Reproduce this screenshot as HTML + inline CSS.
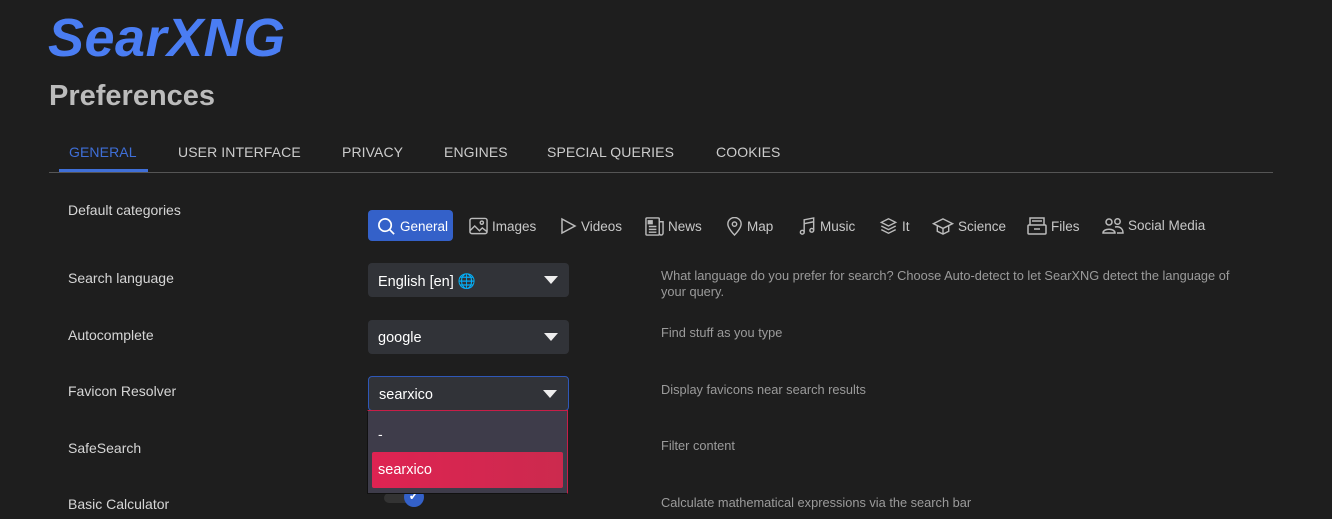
<!DOCTYPE html>
<html><head><meta charset="utf-8"><style>
*{box-sizing:border-box;margin:0;padding:0}
body{width:1332px;height:519px;overflow:hidden;background:#1e1e1e;font-family:"Liberation Sans",sans-serif;position:relative;color:#dcdcdc}
.a{position:absolute;white-space:nowrap}
.logo{left:48px;top:7px;font-size:54px;font-weight:bold;font-style:italic;color:#4a7df3;letter-spacing:0.5px}
.pref{left:49px;top:80px;font-size:29px;font-weight:bold;color:#bbb}
.tab{top:144px;font-size:14px;color:#ccc;letter-spacing:0.1px}
.lbl{left:68px;font-size:14px;color:#d6d6d6}
.help{left:661px;font-size:12.8px;color:#9b9b9b;line-height:16px}
.sel{left:368px;width:201px;height:34px;background:#313338;border-radius:4px;font-size:14.5px;color:#fff;padding:10px 10px}
.sel:after{content:"";position:absolute;right:11px;top:13px;border-left:7px solid transparent;border-right:7px solid transparent;border-top:8px solid #eee}
.cat{top:217px;font-size:13.5px;color:#c8c8c8;display:flex;align-items:center}
.cat svg{margin-right:4px}
</style></head><body>
<div class="a logo">SearXNG</div>
<div class="a pref">Preferences</div>
<div class="a tab" style="left:69px;color:#3f6fd8">GENERAL</div>
<div class="a tab" style="left:178px">USER INTERFACE</div>
<div class="a tab" style="left:342px">PRIVACY</div>
<div class="a tab" style="left:444px">ENGINES</div>
<div class="a tab" style="left:547px">SPECIAL QUERIES</div>
<div class="a tab" style="left:716px">COOKIES</div>
<div class="a" style="left:49px;top:172px;width:1224px;height:1px;background:#555"></div>
<div class="a" style="left:59px;top:169px;width:89px;height:3px;background:#3f6fd8"></div>

<div class="a lbl" style="top:202px">Default categories</div>
<div class="a lbl" style="top:270px">Search language</div>
<div class="a lbl" style="top:327px">Autocomplete</div>
<div class="a lbl" style="top:383px">Favicon Resolver</div>
<div class="a lbl" style="top:440px">SafeSearch</div>
<div class="a lbl" style="top:496px">Basic Calculator</div>

<div class="a" style="left:368px;top:210px;width:85px;height:31px;background:#3461c9;border-radius:4px"></div>
<div class="a cat" style="left:377px;color:#fff"><svg width="19" height="19" viewBox="0 0 20 20" fill="none" stroke="#fff" stroke-width="1.8"><circle cx="8.5" cy="8.5" r="6.5"/><path d="M13.5 13.5L18 18"/></svg>General</div>
<div class="a cat" style="left:469px"><svg width="19" height="18" viewBox="0 0 20 18" fill="none" stroke="#bbb" stroke-width="1.5"><rect x="1" y="1" width="18" height="16" rx="2"/><circle cx="13.5" cy="5.5" r="1.7"/><path d="M1 14l5-5 5 5 3-3 5 4"/></svg>Images</div>
<div class="a cat" style="left:560px"><svg width="17" height="18" viewBox="0 0 17 18" fill="none" stroke="#bbb" stroke-width="1.5"><path d="M2 2l13 7-13 7z"/></svg>Videos</div>
<div class="a cat" style="left:645px"><svg width="19" height="19" viewBox="0 0 20 20" fill="none" stroke="#bbb" stroke-width="1.5"><rect x="1" y="1" width="14" height="18" rx="1"/><path d="M15 5h4v12a2 2 0 0 1-4 0M4 10h8M4 13h8M4 16h8"/><rect x="3.5" y="4" width="4" height="3" fill="#bbb"/></svg>News</div>
<div class="a cat" style="left:726px"><svg width="17" height="19" viewBox="0 0 17 20" fill="none" stroke="#bbb" stroke-width="1.5"><path d="M8.5 19s-7-7-7-11.5a7 7 0 0 1 14 0C15.5 12 8.5 19 8.5 19z"/><circle cx="8.5" cy="7.5" r="2.3"/></svg>Map</div>
<div class="a cat" style="left:799px"><svg width="17" height="19" viewBox="0 0 17 20" fill="none" stroke="#bbb" stroke-width="1.5"><path d="M5 16V3l10-2v13"/><circle cx="3" cy="16" r="2"/><circle cx="13" cy="14" r="2"/><path d="M5 7l10-2"/></svg>Music</div>
<div class="a cat" style="left:879px"><svg width="19" height="18" viewBox="0 0 20 20" fill="none" stroke="#bbb" stroke-width="1.5"><path d="M10 2l8 4-8 4-8-4z M2 10l8 4 8-4 M2 14l8 4 8-4"/></svg>It</div>
<div class="a cat" style="left:932px"><svg width="22" height="19" viewBox="0 0 22 20" fill="none" stroke="#bbb" stroke-width="1.5"><path d="M11 2L1 7l10 5 10-5zM5 9v6l6 3 6-3V9M11 12v6"/></svg>Science</div>
<div class="a cat" style="left:1027px"><svg width="20" height="18" viewBox="0 0 20 18" fill="none" stroke="#bbb" stroke-width="1.5"><rect x="1" y="8" width="18" height="9" rx="1"/><path d="M3 8V1h14v7M5 4h10M7 12h6"/></svg>Files</div>
<div class="a cat" style="left:1102px"><svg width="22" height="17" viewBox="0 0 22 17" fill="none" stroke="#bbb" stroke-width="1.5"><circle cx="7" cy="5" r="3"/><circle cx="15.5" cy="4.5" r="2.7"/><path d="M1 16c0-5 12-5 12 0zM13 10c4-1 8 1 8 6h-6"/></svg>Social Media</div>

<div class="a sel" style="top:263px">English [en] <span style="color:#4aa8f0">🌐</span></div>
<div class="a sel" style="top:320px">google</div>
<div class="a sel" style="top:376px;border:1px solid #2f58b8;height:35px">searxico</div>

<div class="a help" style="top:268px;width:600px">What language do you prefer for search? Choose Auto-detect to let SearXNG detect the language of<br>your query.</div>
<div class="a help" style="top:325px">Find stuff as you type</div>
<div class="a help" style="top:382px">Display favicons near search results</div>
<div class="a help" style="top:438px">Filter content</div>
<div class="a help" style="top:495px">Calculate mathematical expressions via the search bar</div>

<div class="a" style="left:384px;top:493px;width:30px;height:10px;background:#333;border-radius:5px"></div>
<div class="a" style="left:404px;top:487px;width:20px;height:20px;background:#3461c9;border-radius:50%;color:#fff;font-size:13px;text-align:center;line-height:18px;font-weight:bold">✓</div>

<div class="a" style="left:367px;top:410px;width:201px;height:84px;background:#3e3c4a;border:1px solid #c81e48;border-left-color:#111;border-bottom-color:#111"></div>
<div class="a" style="left:378px;top:426px;font-size:14px;color:#fff">-</div>
<div class="a" style="left:372px;top:452px;width:191px;height:36px;background:linear-gradient(90deg,#de2352,#cc2a4e);border-radius:2px;color:#fff;font-size:14.5px;padding:10px 6px">searxico</div>
</body></html>
